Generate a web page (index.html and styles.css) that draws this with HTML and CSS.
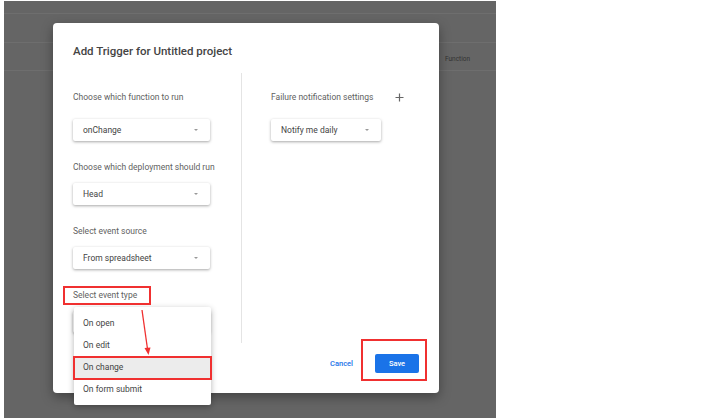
FILE: index.html
```html
<!DOCTYPE html>
<html lang="en">
<head>
    <meta charset="UTF-8">
    <meta name="viewport" content="width=device-width, initial-scale=1.0">
    <title>Add Trigger</title>
    <link rel="stylesheet" href="styles.css">
</head>
<body>

    <div class="page">
        <div class="backdrop">
            <div class="bg-topbar"></div>
            <div class="bg-header"><span class="bg-col">Function</span></div>
        </div>

        <div class="dialog">
            <h1 class="dialog-title">Add Trigger for Untitled project</h1>

            <div class="dialog-body">
                <div class="col col-left">
                    <div class="field first">
                        <label>Choose which function to run</label>
                        <div class="select"><span>onChange</span><i class="caret"></i></div>
                    </div>
                    <div class="field">
                        <label>Choose which deployment should run</label>
                        <div class="select"><span>Head</span><i class="caret"></i></div>
                    </div>
                    <div class="field">
                        <label>Select event source</label>
                        <div class="select"><span>From spreadsheet</span><i class="caret"></i></div>
                    </div>
                    <div class="field">
                        <label>Select event type</label>
                        <!-- covered by the open menu -->
                        <div class="select"><i class="caret"></i></div>
                    </div>
                </div>

                <div class="col col-right">
                    <div class="field first">
                        <div class="label-row">
                            <label>Failure notification settings</label>
                            <svg class="plus" width="9" height="9" viewBox="0 0 9 9">
                                <path d="M4.5 0.5v8M0.5 4.5h8" stroke="#666" stroke-width="1.2" fill="none"/>
                            </svg>
                        </div>
                        <div class="select narrow"><span>Notify me daily</span><i class="caret"></i></div>
                    </div>
                </div>
            </div>

            <div class="dialog-footer">
                <button class="btn-text">Cancel</button>
                <button class="btn-primary">Save</button>
            </div>
        </div>

        <!-- open dropdown for event type -->
        <ul class="menu">
            <li>On open</li>
            <li>On edit</li>
            <li class="active">On change</li>
            <li>On form submit</li>
        </ul>

        <!-- red annotations -->
        <div class="mark mark-label"></div>
        <div class="mark mark-option"></div>
        <div class="mark mark-save"></div>
        <svg class="mark-arrow" width="20" height="50" viewBox="0 0 20 50">
            <path d="M3 1 L8.5 40" stroke="#f03030" stroke-width="1.3" fill="none"/>
            <path d="M5.5 39 L9.5 46 L11.5 38.5 Z" fill="#f03030"/>
        </svg>
    </div>

</body>
</html>
```

FILE: styles.css
```css
body {
    margin: 0;
    background: white;
    font-family: Roboto, "Liberation Sans", Arial, sans-serif;
}
.page {
    position: relative;
    width: 708px;
    height: 420px;
    padding: 1px 0 0 4px;
    box-sizing: border-box;
    overflow: hidden;
}
.backdrop {
    width: 492px;
    height: 417px;
    background: #656565;
}
.bg-topbar {
    height: 12px;
    border-bottom: 1px solid #6e6e6e;
}
.bg-header {
    margin-top: 28px;
    height: 27px;
    line-height: 25px;
    border-top: 1px solid #6e6e6e;
    border-bottom: 1px solid #6e6e6e;
    padding-left: 441px;
}
.bg-col {
    font-size: 6.5px;
    color: #333;
}
.dialog {
    position: absolute;
    left: 53px;
    top: 23px;
    width: 386px;
    height: 370px;
    box-sizing: border-box;
    padding: 0 20px;
    background: white;
    border-radius: 4px;
    box-shadow: 0 4px 12px rgba(0, 0, 0, 0.35);
}
.dialog-title {
    margin: 0;
    padding-top: 20px;
    font-size: 11.5px;
    line-height: 16px;
    font-weight: 500;
    color: #444;
}
.dialog-body {
    display: flex;
    margin-top: 14px;
    height: 270px;
}
.col {
    padding-top: 18px;
}
.col-left {
    width: 168px;
}
.col-right {
    flex: 1;
    border-left: 1px solid #e4e4e4;
    padding-left: 29px;
}
.field {
    margin-bottom: 20px;
}
.field label {
    display: block;
    font-size: 8.5px;
    line-height: 12px;
    color: #5f5f5f;
}
.select {
    position: relative;
    width: 137px;
    height: 22px;
    margin-top: 10px;
    box-sizing: border-box;
    padding-left: 10px;
    font-size: 8.5px;
    line-height: 22px;
    color: #444;
    background: white;
    border-radius: 2px;
    box-shadow: 0 1px 3px rgba(0, 0, 0, 0.35);
}
.field.first .select {
    margin-top: 16px;
}
.select.narrow {
    width: 110px;
}
.caret {
    position: absolute;
    right: 12px;
    top: 10px;
    width: 0;
    height: 0;
    border-left: 2.5px solid transparent;
    border-right: 2.5px solid transparent;
    border-top: 2.5px solid #999;
}
.label-row {
    display: flex;
    justify-content: space-between;
    align-items: center;
    width: 133px;
}
.label-row label {
    display: inline;
}
.dialog-footer {
    display: flex;
    justify-content: flex-end;
    align-items: center;
    gap: 22px;
    margin-top: 11px;
}
.btn-text, .btn-primary {
    font-family: inherit;
    font-size: 7.5px;
    font-weight: 500;
    border: none;
    padding: 0;
    cursor: pointer;
}
.btn-text {
    background: none;
    color: #1a73e8;
}
.btn-primary {
    width: 44px;
    height: 19px;
    background: #1a73e8;
    color: white;
    border-radius: 2px;
}
.menu {
    position: absolute;
    left: 74px;
    top: 307px;
    width: 137px;
    margin: 0;
    padding: 5px 0;
    list-style: none;
    background: white;
    border-radius: 2px;
    box-shadow: 0 2px 6px rgba(0, 0, 0, 0.3);
}
.menu li {
    height: 22px;
    line-height: 22px;
    padding-left: 9px;
    font-size: 8.5px;
    color: #444;
}
.menu li.active {
    background: #ececec;
}
.mark {
    position: absolute;
    border: 2px solid #f03030;
    box-sizing: border-box;
}
.mark-label {
    left: 63px;
    top: 286px;
    width: 88px;
    height: 19px;
}
.mark-option {
    left: 73px;
    top: 356px;
    width: 139px;
    height: 24px;
}
.mark-save {
    left: 361px;
    top: 339px;
    width: 66px;
    height: 42px;
}
.mark-arrow {
    position: absolute;
    left: 139px;
    top: 309px;
}
```
